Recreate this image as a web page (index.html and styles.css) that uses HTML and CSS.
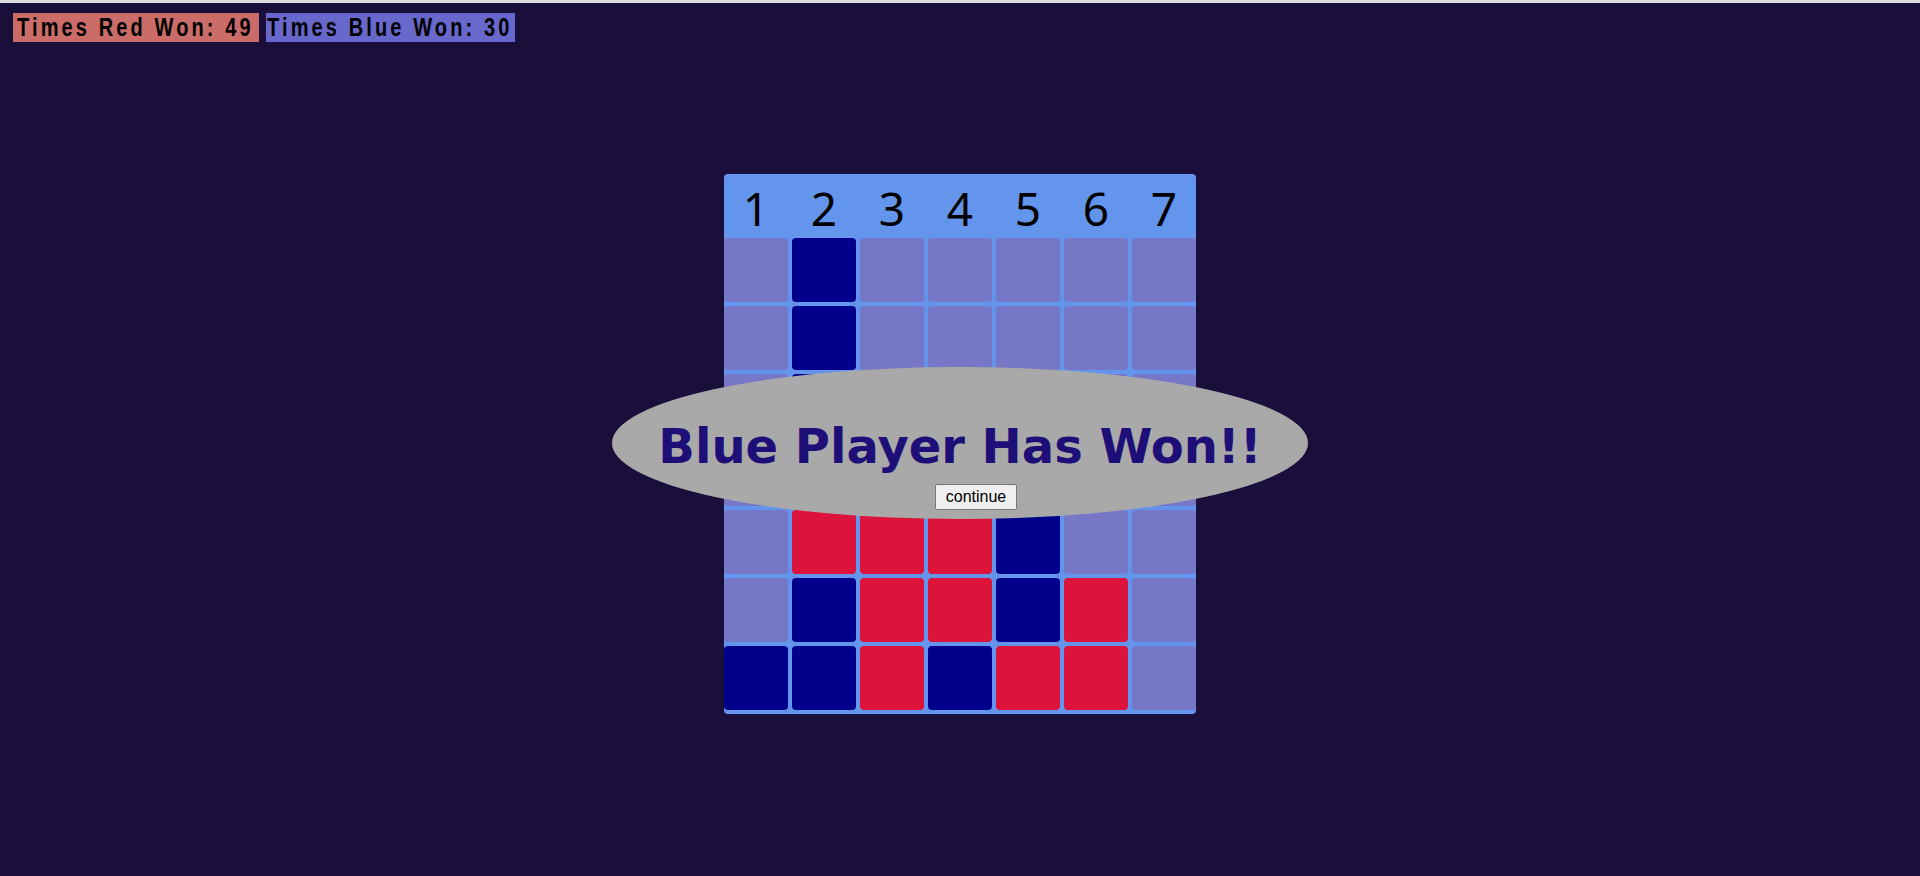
FILE: index.html
```html
<!DOCTYPE html>
<html lang="en">
<head>
    <meta charset="UTF-8">
    <meta name="viewport" content="width=device-width, initial-scale=1.0">
    <title>Connect Four</title>
    <link rel="stylesheet" href="styles.css">
</head>
<body>

    <!-- Score Counters -->
    <div class="scores">
        <div class="score red-score"><span>Times Red Won: 49</span></div>
        <div class="score blue-score"><span>Times Blue Won: 30</span></div>
    </div>

    <!-- Game Board -->
    <div class="game">
        <div class="board">
            <div class="heads">
                <div>1</div><div>2</div><div>3</div><div>4</div><div>5</div><div>6</div><div>7</div>
            </div>
            <div class="grid">
                <div class="cell"></div><div class="cell blue"></div><div class="cell"></div><div class="cell"></div><div class="cell"></div><div class="cell"></div><div class="cell"></div>
                <div class="cell"></div><div class="cell blue"></div><div class="cell"></div><div class="cell"></div><div class="cell"></div><div class="cell"></div><div class="cell"></div>
                <div class="cell"></div><div class="cell blue"></div><div class="cell"></div><div class="cell"></div><div class="cell"></div><div class="cell"></div><div class="cell"></div>
                <div class="cell"></div><div class="cell blue"></div><div class="cell blue"></div><div class="cell red"></div><div class="cell"></div><div class="cell"></div><div class="cell"></div>
                <div class="cell"></div><div class="cell red"></div><div class="cell red"></div><div class="cell red"></div><div class="cell blue"></div><div class="cell"></div><div class="cell"></div>
                <div class="cell"></div><div class="cell blue"></div><div class="cell red"></div><div class="cell red"></div><div class="cell blue"></div><div class="cell red"></div><div class="cell"></div>
                <div class="cell blue"></div><div class="cell blue"></div><div class="cell red"></div><div class="cell blue"></div><div class="cell red"></div><div class="cell red"></div><div class="cell"></div>
            </div>
        </div>

        <!-- Winner Message -->
        <div class="winner">
            <h1>Blue Player Has Won!!</h1>
            <button>continue</button>
        </div>
    </div>

</body>
</html>
```

FILE: styles.css
```css
/* General styling for the page */
body {
    margin: 0;
    border-top: 3px solid #dddddd;
    background-color: #1a0e3a;
    font-family: "Liberation Sans", Arial, sans-serif;
}

/* Score counters in the top left corner */
.scores {
    display: flex;
    gap: 7px;
    padding: 10px 13px 0;
}

.score {
    box-sizing: border-box;
    height: 29px;
    line-height: 29px;
    font-family: Impact, "Liberation Sans", sans-serif;
    font-weight: bold;
    font-size: 25px;
    letter-spacing: 3.9px;
    color: black;
    white-space: nowrap;
    overflow: hidden;
}

/* Squeeze the text so it looks like a condensed poster font */
.score span {
    display: inline-block;
    transform: scaleX(0.8);
    transform-origin: left center;
}

.red-score {
    width: 246px;
    padding-left: 4px;
    background: #cc6c68;
}

.blue-score {
    width: 249px;
    padding-left: 1px;
    background: #6767cc;
}

/* Container that holds the board and the message */
.game {
    position: relative;
    width: 472px;
    margin: 132px auto 0;
}

.board {
    background: #6495ed;
    border-radius: 4px;
    padding-bottom: 4px;
}

/* Column numbers */
.heads {
    display: grid;
    grid-template-columns: repeat(7, 64px);
    column-gap: 4px;
    height: 64px;
}

.heads div {
    text-align: center;
    font-family: "Noto Sans", "Open Sans", sans-serif;
    font-size: 46px;
    line-height: 68px;
    color: black;
}

/* Cells of the board */
.grid {
    display: grid;
    grid-template-columns: repeat(7, 64px);
    grid-auto-rows: 64px;
    gap: 4px;
}

.cell {
    background: #7777c8;
    border-radius: 4px;
}

.cell.blue {
    background: #00008b;
}

.cell.red {
    background: #dc143c;
}

/* Oval with the winner text */
.winner {
    position: absolute;
    top: 193px;
    left: -112px;
    box-sizing: border-box;
    width: 696px;
    height: 152px;
    padding-top: 51px;
    border-radius: 50%;
    background: #a9a9a9;
    text-align: center;
}

.winner h1 {
    margin: 0;
    font-family: Verdana, "DejaVu Sans", sans-serif;
    font-size: 48px;
    font-weight: bold;
    color: #1e0f78;
}

.winner button {
    margin-top: 10px;
    margin-left: 32px;
    padding: 3px 10px;
    font-family: "Liberation Sans", Arial, sans-serif;
    font-size: 16px;
    color: black;
    background: #efefef;
    border: 1px solid #767676;
    border-radius: 2px;
}
```
